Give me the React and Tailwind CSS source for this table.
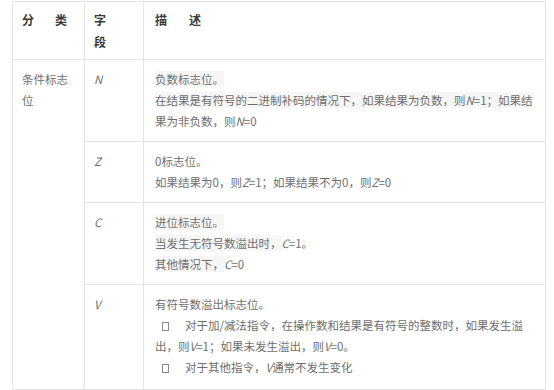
import React from "react";

const F = { fontFamily: '"Noto Sans CJK SC", "Noto Sans", sans-serif' };

function Hl({ children }) {
  return <span className="bg-[#f6f6f6]">{children}</span>;
}

function Box() {
  return <span className="inline-block w-[7px] h-[9px] border border-[#8a8a8a] align-[-1px]" />;
}

export default function App() {
  const td1 = "border border-[#e4e4e4] align-top pl-[9px] pr-[4px]";
  const td3 = "border border-[#e4e4e4] align-top pl-[11px] pr-[4px]";
  const body = "pt-[9px] pb-[9px] leading-[21px]";
  return (
    <div className="w-[554px] h-[390px] bg-white overflow-hidden pt-px pl-[12px]" style={F}>
      <table className="table-fixed border-collapse w-[533px] text-[11.5px] text-[#6e6e6e]">
        <colgroup>
          <col className="w-[72px]" />
          <col className="w-[59px]" />
          <col className="w-[402px]" />
        </colgroup>
        <thead>
          <tr className="text-[#3a3a3a] font-bold text-[12px] leading-[22px]">
            <th className={`${td1} pt-[7px] pb-[6px] text-left font-bold`}>
              <span>分</span>
              <span className="ml-[21px]">类</span>
            </th>
            <th className={`${td1} pt-[7px] pb-[6px] text-left font-bold`}>
              <div>字</div>
              <div>段</div>
            </th>
            <th className={`${td3} pt-[7px] pb-[6px] text-left font-bold`}>
              <span>描</span>
              <span className="ml-[22px]">述</span>
            </th>
          </tr>
        </thead>
        <tbody>
          <tr>
            <td rowSpan={4} className={`${td1} ${body}`}>
              <div>条件标志</div>
              <div>位</div>
            </td>
            <td className={`${td1} ${body} italic`}>N</td>
            <td className={`${td3} ${body} whitespace-nowrap`}>
              <div><Hl>负数标志位。</Hl></div>
              <div><Hl>在结果是有符号的二进制补码的情况下，如果结果为负数，则<i>N</i>=1；如果结</Hl></div>
              <div>果为非负数，则<i>N</i>=0</div>
            </td>
          </tr>
          <tr>
            <td className={`${td1} ${body} italic`}>Z</td>
            <td className={`${td3} ${body} whitespace-nowrap`}>
              <div>0标志位。</div>
              <div>如果结果为0，则<i>Z</i>=1；如果结果不为0，则<i>Z</i>=0</div>
            </td>
          </tr>
          <tr>
            <td className={`${td1} ${body} italic`}>C</td>
            <td className={`${td3} ${body} whitespace-nowrap`}>
              <div><Hl>进位标志位。</Hl></div>
              <div><Hl>当发生无符号数溢出时，</Hl><i>C</i>=1。</div>
              <div><Hl>其他情况下，</Hl><i>C</i>=0</div>
            </td>
          </tr>
          <tr>
            <td className={`${td1} pt-[9px] pb-[11px] leading-[21px] italic`}>V</td>
            <td className={`${td3} pt-[9px] pb-[11px] leading-[21px] whitespace-nowrap`}>
              <div>有符号数溢出标志位。</div>
              <div>
                <span className="ml-[7px]"><Box /></span>
                <span className="ml-[16px]">对于加/减法指令，在操作数和结果是有符号的整数时，如果发生溢</span>
              </div>
              <div>出，则<i>V</i>=1；如果未发生溢出，则<i>V</i>=0。</div>
              <div>
                <span className="ml-[7px]"><Box /></span>
                <span className="ml-[16px]">对于其他指令，<i>V</i>通常不发生变化</span>
              </div>
            </td>
          </tr>
          <tr>
            <td className={`${td1} h-[30px]`}></td>
            <td className={`${td1} h-[30px]`}></td>
            <td className={`${td3} h-[30px]`}></td>
          </tr>
        </tbody>
      </table>
    </div>
  );
}
